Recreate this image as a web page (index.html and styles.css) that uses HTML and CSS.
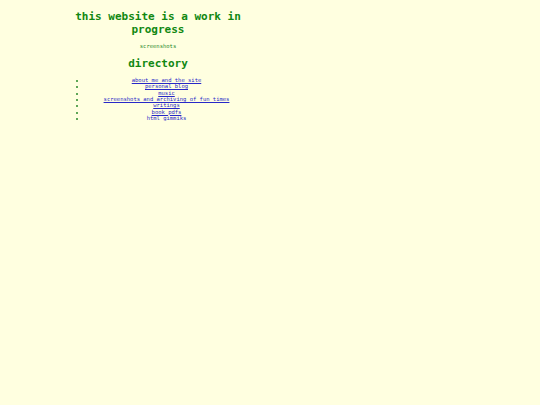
FILE: index.html
```html
<!DOCTYPE html>
<html>
<head>
<meta charset="utf-8">
<title>work in progress</title>
<link rel="stylesheet" href="styles.css">
</head>
<body>
<div class="page">
  <h1 class="title">this website is a work in progress</h1>
  <p class="sub">screenshots</p>
  <h2 class="heading">directory</h2>
  <ul class="dir">
    <li><a href="#">about me and the site</a></li>
    <li><a href="#">personal blog</a></li>
    <li><a href="#">music</a></li>
    <li><a href="#">screenshots and archiving of fun times</a></li>
    <li><a href="#">writings</a></li>
    <li><a href="#">book pdfs</a></li>
    <li><a href="#">html gimmiks</a></li>
  </ul>
</div>
</body>
</html>
```

FILE: styles.css
```css
html, body {
  margin: 0;
  padding: 0;
  background: #ffffe0;
}
body {
  font-family: "DejaVu Sans Mono", "Liberation Mono", monospace;
  color: #008000;
}
.page {
  margin-left: 64px;
  width: 188px;
  padding-top: 9.5px;
  text-align: center;
}
.title {
  margin: 0;
  font-size: 11px;
  line-height: 13px;
  font-weight: bold;
  color: #118811;
}
.sub {
  margin: 7px 0 0;
  font-size: 5.5px;
  line-height: 6.5px;
  color: #2a8a2a;
}
.heading {
  margin: 7.5px 0 0;
  font-size: 11px;
  line-height: 13px;
  font-weight: bold;
  color: #118811;
}
.dir {
  margin: 7.5px 0 0;
  padding-left: 22px;
  font-size: 5.5px;
  line-height: 6.33px;
  list-style: disc outside;
}
.dir li {
  padding-right: 5px;
}
.dir li::marker {
  color: #2a8a2a;
}
.dir a {
  color: #2828c8;
  text-decoration: underline;
}
```
